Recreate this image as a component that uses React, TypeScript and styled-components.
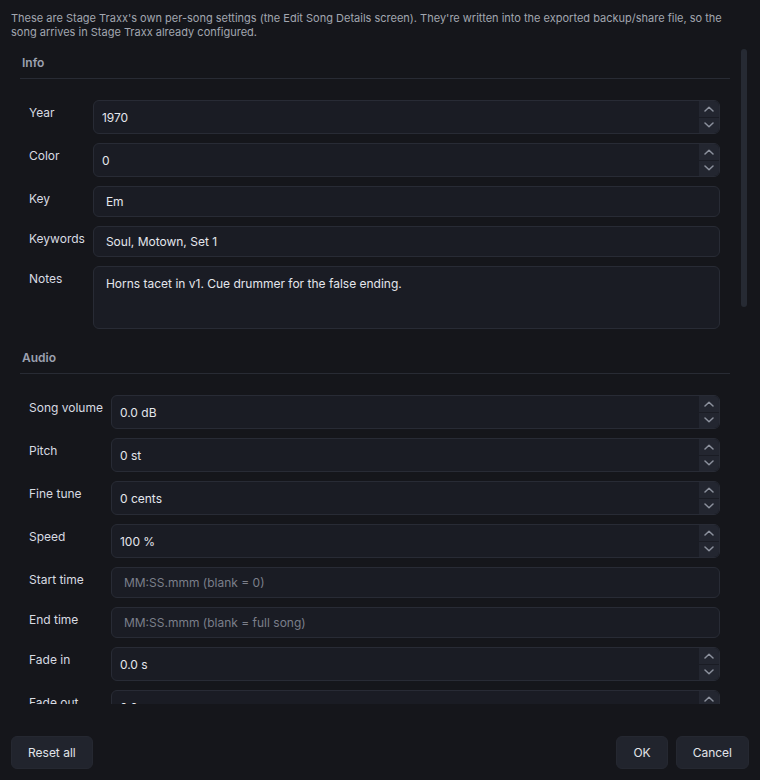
import React from "react";
import styled, { createGlobalStyle } from "styled-components";

const GlobalStyle = createGlobalStyle`
  html, body {
    margin: 0;
    padding: 0;
    background: #15161b;
  }
  * {
    box-sizing: border-box;
  }
`;

type Field = {
  label: string;
  kind: "spin" | "text" | "notes";
  value?: string;
  placeholder?: string;
};

type Section = {
  title: string;
  fields: Field[];
};

const sections: Section[] = [
  {
    title: "Info",
    fields: [
      { label: "Year", kind: "spin", value: "1970" },
      { label: "Color", kind: "spin", value: "0" },
      { label: "Key", kind: "text", value: "Em" },
      { label: "Keywords", kind: "text", value: "Soul, Motown, Set 1" },
      { label: "Notes", kind: "notes", value: "Horns tacet in v1. Cue drummer for the false ending." },
    ],
  },
  {
    title: "Audio",
    fields: [
      { label: "Song volume", kind: "spin", value: "0.0 dB" },
      { label: "Pitch", kind: "spin", value: "0 st" },
      { label: "Fine tune", kind: "spin", value: "0 cents" },
      { label: "Speed", kind: "spin", value: "100 %" },
      { label: "Start time", kind: "text", placeholder: "MM:SS.mmm (blank = 0)" },
      { label: "End time", kind: "text", placeholder: "MM:SS.mmm (blank = full song)" },
      { label: "Fade in", kind: "spin", value: "0.0 s" },
      { label: "Fade out", kind: "spin", value: "0.0 s" },
    ],
  },
];

const THUMB_RATIO = 0.395;

const Window = styled.div`
  width: 760px;
  height: 780px;
  display: flex;
  flex-direction: column;
  padding: 11px;
  background: #15161b;
  font-family: Inter, "Noto Sans", sans-serif;
  color: #dadde4;
`;

const Intro = styled.p`
  margin: 0 0 8px;
  font-size: 11px;
  line-height: 14px;
  color: #a2a6b0;
`;

const Body = styled.div`
  flex: 1;
  min-height: 0;
  display: flex;
`;

const ScrollArea = styled.div`
  flex: 1;
  min-width: 0;
  overflow: hidden;
  padding: 8px 9px 0 9px;
`;

const ScrollTrack = styled.div`
  width: 10px;
  padding: 2px 2px;
`;

const ScrollThumb = styled.div`
  width: 6px;
  border-radius: 3px;
  background: #262a33;
`;

const Group = styled.section`
  margin-bottom: 21px;
`;

const GroupTitle = styled.div`
  font-size: 12px;
  font-weight: 600;
  line-height: 16px;
  padding: 0 2px 7px;
  color: #9ca1b0;
  border-bottom: 1px solid #282b34;
`;

const FormGrid = styled.div`
  display: grid;
  grid-template-columns: auto 1fr;
  column-gap: 8px;
  row-gap: 9px;
  padding: 21px 10px 0 9px;
`;

const Label = styled.label`
  font-size: 12px;
  line-height: 16px;
  padding-top: 5px;
  color: #d8dbe2;
  white-space: nowrap;
`;

const SpinBox = styled.div`
  display: flex;
  height: 34px;
  border: 1px solid #282b35;
  border-radius: 6px;
  background: #1a1c24;
  overflow: hidden;
`;

const SpinValue = styled.input`
  flex: 1;
  min-width: 0;
  border: none;
  outline: none;
  background: transparent;
  padding: 0 8px;
  font-family: inherit;
  font-size: 12px;
  color: #e4e6ec;
`;

const SpinButtons = styled.div`
  width: 20px;
  display: flex;
  flex-direction: column;
  gap: 1px;
  background: #1a1c24;
`;

const SpinButton = styled.button`
  flex: 1;
  display: flex;
  align-items: center;
  justify-content: center;
  padding: 0;
  border: none;
  background: #232630;
  cursor: pointer;
`;

const TextInput = styled.input`
  height: 31px;
  border: 1px solid #282b35;
  border-radius: 6px;
  background: #1a1c24;
  padding: 0 12px;
  outline: none;
  font-family: inherit;
  font-size: 12px;
  color: #e4e6ec;

  &::placeholder {
    color: #7b7f8a;
  }
`;

const NotesInput = styled.textarea`
  height: 63px;
  border: 1px solid #282b35;
  border-radius: 6px;
  background: #1a1c24;
  padding: 9px 12px;
  outline: none;
  resize: none;
  font-family: inherit;
  font-size: 12px;
  line-height: 16px;
  color: #e4e6ec;
`;

const Footer = styled.div`
  display: flex;
  justify-content: space-between;
  align-items: center;
  margin-top: 32px;
`;

const ButtonGroup = styled.div`
  display: flex;
  gap: 8px;
`;

const Button = styled.button`
  height: 33px;
  padding: 0 16px;
  border: 1px solid #252831;
  border-radius: 6px;
  background: #21242d;
  font-family: inherit;
  font-size: 12px;
  color: #e2e4ea;
  cursor: pointer;
`;

const Chevron = ({ up }: { up?: boolean }) => (
  <svg width="10" height="6" viewBox="0 0 10 6" fill="none">
    <polyline
      points={up ? "1,5 5,1.2 9,5" : "1,1 5,4.8 9,1"}
      stroke="#8b909c"
      strokeWidth="1.5"
      strokeLinecap="round"
      strokeLinejoin="round"
    />
  </svg>
);

const FieldControl = ({ field }: { field: Field }) => {
  if (field.kind === "spin") {
    return (
      <SpinBox>
        <SpinValue defaultValue={field.value} />
        <SpinButtons>
          <SpinButton aria-label="Increase">
            <Chevron up />
          </SpinButton>
          <SpinButton aria-label="Decrease">
            <Chevron />
          </SpinButton>
        </SpinButtons>
      </SpinBox>
    );
  }
  if (field.kind === "notes") {
    return <NotesInput defaultValue={field.value} />;
  }
  return <TextInput defaultValue={field.value} placeholder={field.placeholder} />;
};

export default function App() {
  return (
    <>
      <GlobalStyle />
      <Window>
        <Intro>
          These are Stage Traxx's own per-song settings (the Edit Song Details screen). They're written into the
          exported backup/share file, so the song arrives in Stage Traxx already configured.
        </Intro>
        <Body>
          <ScrollArea>
            {sections.map((section) => (
              <Group key={section.title}>
                <GroupTitle>{section.title}</GroupTitle>
                <FormGrid>
                  {section.fields.map((field) => (
                    <React.Fragment key={field.label}>
                      <Label>{field.label}</Label>
                      <FieldControl field={field} />
                    </React.Fragment>
                  ))}
                </FormGrid>
              </Group>
            ))}
          </ScrollArea>
          <ScrollTrack>
            <ScrollThumb style={{ height: `${THUMB_RATIO * 100}%` }} />
          </ScrollTrack>
        </Body>
        <Footer>
          <Button>Reset all</Button>
          <ButtonGroup>
            <Button>OK</Button>
            <Button>Cancel</Button>
          </ButtonGroup>
        </Footer>
      </Window>
    </>
  );
}
